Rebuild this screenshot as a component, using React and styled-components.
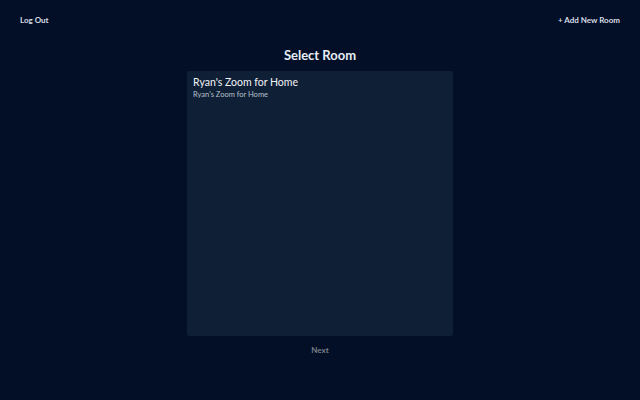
import React from 'react';
import styled, { createGlobalStyle } from 'styled-components';

const GlobalStyle = createGlobalStyle`
  html, body {
    margin: 0;
    padding: 0;
    background: #020f26;
  }
  body {
    font-family: Lato, "Open Sans", sans-serif;
    color: #ffffff;
  }
`;

const Page = styled.div`
  width: 640px;
  height: 400px;
  background: #020f26;
  display: flex;
  flex-direction: column;
  align-items: center;
`;

const TopBar = styled.div`
  width: 100%;
  box-sizing: border-box;
  display: flex;
  justify-content: space-between;
  align-items: center;
  padding: 13px 20px 0 20px;
  height: 26px;
`;

const NavLink = styled.a`
  font-size: 8px;
  font-weight: 700;
  color: #d8dde6;
  text-decoration: none;
  cursor: pointer;
`;

const Title = styled.h1`
  margin: 20px 0 0 0;
  font-size: 13px;
  font-weight: 700;
  color: #e6ecf5;
  line-height: 18px;
`;

const RoomPanel = styled.div`
  margin-top: 7px;
  width: 266px;
  height: 265px;
  box-sizing: border-box;
  background: #0e1f36;
  border-radius: 2px;
  padding: 5px 6px;
`;

const RoomItem = styled.div`
  display: flex;
  flex-direction: column;
  cursor: pointer;
`;

const RoomName = styled.div`
  font-size: 10.5px;
  color: #f2f4f8;
  line-height: 13px;
`;

const RoomSub = styled.div`
  font-size: 7.5px;
  color: #b8c0cc;
  line-height: 11px;
`;

const NextButton = styled.button`
  margin-top: 7px;
  background: none;
  border: none;
  font-family: inherit;
  font-size: 8px;
  font-weight: 700;
  color: #7a7f8a;
  padding: 2px 6px;
`;

const rooms = [{ name: "Ryan's Zoom for Home", sub: "Ryan's Zoom for Home" }];

export default function App() {
  return (
    <>
      <GlobalStyle />
      <Page>
        <TopBar>
          <NavLink>Log Out</NavLink>
          <NavLink>+ Add New Room</NavLink>
        </TopBar>
        <Title>Select Room</Title>
        <RoomPanel>
          {rooms.map((r) => (
            <RoomItem key={r.name}>
              <RoomName>{r.name}</RoomName>
              <RoomSub>{r.sub}</RoomSub>
            </RoomItem>
          ))}
        </RoomPanel>
        <NextButton disabled>Next</NextButton>
      </Page>
    </>
  );
}
